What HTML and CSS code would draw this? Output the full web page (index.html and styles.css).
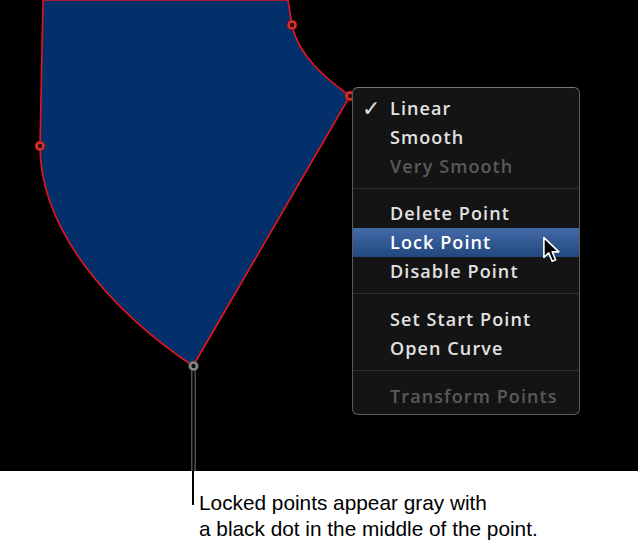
FILE: index.html
```html
<!DOCTYPE html>
<html>
<head>
<meta charset="utf-8">
<link rel="stylesheet" href="styles.css">
</head>
<body>
<div class="stage">
  <svg class="canvas" width="638" height="471" viewBox="0 0 638 471">
    <path d="M43,0 L40,146 C40,230 110,310 193,366 L350,96 C325,78 298,55 292,25 L288,0 Z" fill="#03306b" stroke="#e8141c" stroke-width="1.6"/>
    <line x1="192" y1="370" x2="192" y2="471" stroke="#a0a0a0" stroke-width="1"/>
    <line x1="195" y1="370" x2="195" y2="471" stroke="#a0a0a0" stroke-width="1"/>
    <line x1="193.5" y1="370" x2="193.5" y2="471" stroke="#000" stroke-width="2"/>
    <g class="pt">
      <circle cx="292" cy="25" r="5" fill="#d6322f" stroke="#7a1010" stroke-width="0.8"/>
      <circle cx="292" cy="25" r="2.2" fill="#3a0606"/>
      <circle cx="40" cy="146" r="5" fill="#d6322f" stroke="#7a1010" stroke-width="0.8"/>
      <circle cx="40" cy="146" r="2.2" fill="#3a0606"/>
      <circle cx="350" cy="96" r="5" fill="#d6322f" stroke="#7a1010" stroke-width="0.8"/>
      <circle cx="350" cy="96" r="2.2" fill="#3a0606"/>
      <circle cx="193.5" cy="366" r="5" fill="#8a8a8a" stroke="#3a3a3a" stroke-width="0.8"/>
      <circle cx="193.5" cy="366" r="2.2" fill="#111"/>
    </g>
  </svg>
  <div class="menu">
    <div class="item"><span class="check">✓</span>Linear</div>
    <div class="item">Smooth</div>
    <div class="item disabled">Very Smooth</div>
    <div class="sep first"></div>
    <div class="item">Delete Point</div>
    <div class="item active">Lock Point</div>
    <div class="item">Disable Point</div>
    <div class="sep"></div>
    <div class="item">Set Start Point</div>
    <div class="item">Open Curve</div>
    <div class="sep"></div>
    <div class="item disabled">Transform Points</div>
  </div>
  <svg class="cursor" width="22" height="30" viewBox="0 0 20 28">
    <path d="M1.5,1.5 L1.5,20 L6,15.8 L9.2,23.5 L12.4,22.2 L9.3,14.8 L15.5,14.8 Z" fill="#000" stroke="#fff" stroke-width="1.5" stroke-linejoin="round"/>
  </svg>
</div>
<div class="caption">
  <div class="leader"></div>
  <p class="text">Locked points appear gray with<br>a black dot in the middle of the point.</p>
</div>
</body>
</html>
```
FILE: styles.css
```css
html, body {
  margin: 0;
  padding: 0;
  background: #fff;
}
.stage {
  position: relative;
  width: 638px;
  height: 471px;
  background: #000;
  overflow: hidden;
}
.canvas {
  position: absolute;
  left: 0;
  top: 0;
}
.menu {
  position: absolute;
  left: 352px;
  top: 87px;
  width: 228px;
  box-sizing: border-box;
  padding: 6px 0 3px;
  background: #141414;
  border: 1px solid #5c5c5c;
  border-top-color: #787878;
  border-radius: 6px;
  font-family: "Open Sans", sans-serif;
  font-weight: 600;
  font-size: 18px;
  color: #e2e2e2;
}
.item {
  position: relative;
  height: 29px;
  line-height: 29px;
  padding-left: 37px;
  white-space: nowrap;
  letter-spacing: 1.1px;
}
.check {
  position: absolute;
  left: 9px;
  top: 0;
  font-family: "DejaVu Sans", sans-serif;
  font-weight: bold;
  font-size: 22px;
  letter-spacing: 0;
}
.disabled {
  color: #5a5a5a;
}
.active {
  background: linear-gradient(#4369a8, #22487f);
  color: #fff;
}
.sep {
  height: 1px;
  background: #2e2e2e;
  margin: 7px 0 11px;
}
.sep.first {
  margin-bottom: 10px;
}
.cursor {
  position: absolute;
  left: 542px;
  top: 236px;
}
.caption {
  display: flex;
  align-items: flex-start;
  padding-left: 192px;
  height: 77px;
}
.leader {
  width: 2px;
  height: 34px;
  background: #000;
  flex: none;
}
.text {
  margin: 19px 0 0 5px;
  font-family: "Liberation Sans", Arial, sans-serif;
  font-size: 20.8px;
  line-height: 26px;
  color: #000;
}
```
